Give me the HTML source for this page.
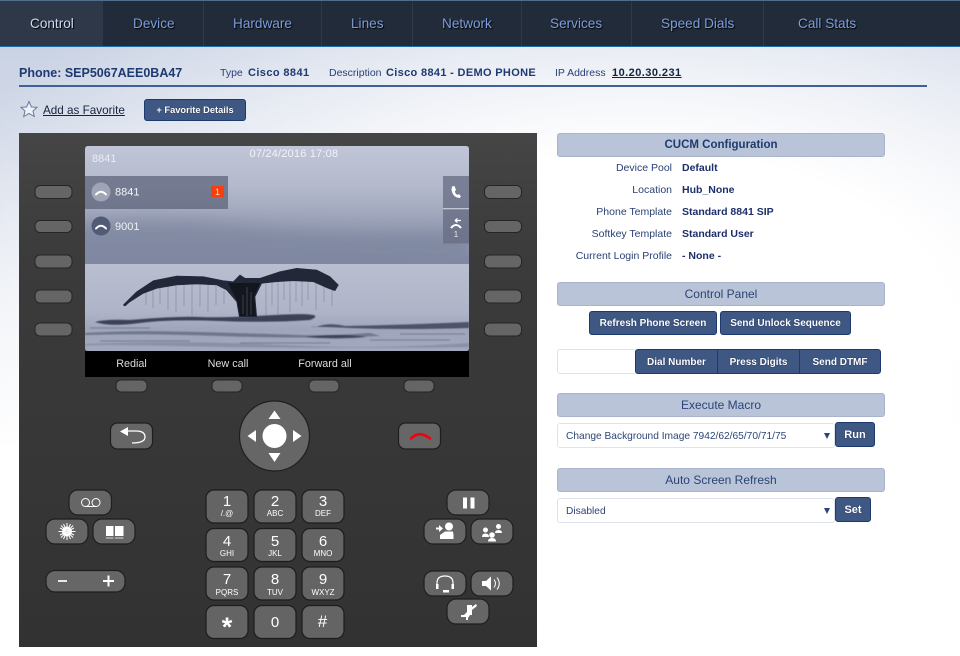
<!DOCTYPE html>
<html><head><meta charset="utf-8"><title>Phone Control</title>
<style>
html,body{margin:0;padding:0}
body{width:960px;height:656px;overflow:hidden;position:relative;font-family:"Liberation Sans",sans-serif;color:#1f3a70;
background:radial-gradient(ellipse 760px 420px at 640px 320px,#fff 40%,rgba(255,255,255,0) 100%),linear-gradient(180deg,#cad3e4 46px,#d3dae8 140px,#eef1f6 300px,#fff 450px);}
.a{position:absolute;white-space:nowrap}
#nav{left:0;top:0;width:960px;background:#222b3a;border-top:1px solid #4f6f8a;border-bottom:1px solid #1d6ea8;box-sizing:content-box;height:45px}
#nav .t{position:absolute;top:15px;font-size:13.6px;line-height:16px;color:#7c9ddb;text-shadow:1px 1px 1px #000}
#nav .s{position:absolute;top:0;height:45px;width:1px;background:#2f3949}
#act{position:absolute;left:0;top:0;width:103px;height:45px;background:#2e3849}
.b{font-weight:bold}
.hd{position:absolute;left:557px;width:328px;height:24px;box-sizing:border-box;background:#b9c4d8;border:1px solid #a8b4cb;border-radius:3px;text-align:center;font-size:12px;line-height:22px;color:#2b4377}
.lb{position:absolute;width:672px;left:0;text-align:right;font-size:10.5px;line-height:12px;color:#2a4176}
.vl{position:absolute;left:682px;font-size:10.5px;line-height:12px;font-weight:bold;color:#1c2f6b;white-space:nowrap}
.btn{position:absolute;box-sizing:border-box;background:#3f5783;border:1px solid #1d3a70;border-radius:3px;color:#fff;text-align:center;font-size:10px;font-weight:bold;line-height:23px;text-shadow:0 0 1px #0a1a3a}
.sel{position:absolute;left:557px;width:278px;height:25px;box-sizing:border-box;background:#fff;border:1px solid #dfe3ec;border-radius:3px;font-size:10.2px;line-height:25px;padding-left:8px;color:#2d4576}
.sel i{position:absolute;right:4px;top:9px;width:0;height:0;border-left:3.5px solid transparent;border-right:3.5px solid transparent;border-top:6px solid #2d4576}
svg{position:absolute;left:0;top:0}
</style></head><body>
<div id="nav" class="a">
<div id="act"></div>
<span class="s" style="left:203px"></span><span class="s" style="left:321px"></span><span class="s" style="left:412px"></span><span class="s" style="left:521px"></span><span class="s" style="left:631px"></span><span class="s" style="left:763px"></span>
<span class="t" style="left:30px;color:#c9daf3">Control</span>
<span class="t" style="left:133px">Device</span>
<span class="t" style="left:233px">Hardware</span>
<span class="t" style="left:351px">Lines</span>
<span class="t" style="left:442px">Network</span>
<span class="t" style="left:550px">Services</span>
<span class="t" style="left:661px">Speed Dials</span>
<span class="t" style="left:798px">Call Stats</span>
</div>

<div class="a b" style="left:19px;top:66px;font-size:12.5px;line-height:14px;color:#1f3a70">Phone: SEP5067AEE0BA47</div>
<div class="a" style="left:220px;top:67px;font-size:10.5px;line-height:13px;color:#2a4176">Type</div>
<div class="a b" style="left:248px;top:66px;font-size:11px;line-height:14px;letter-spacing:.4px;color:#1f3a70">Cisco 8841</div>
<div class="a" style="left:329px;top:67px;font-size:10.5px;line-height:13px;color:#2a4176">Description</div>
<div class="a b" style="left:386px;top:66px;font-size:11px;line-height:14px;letter-spacing:.33px;color:#1f3a70">Cisco 8841 - DEMO PHONE</div>
<div class="a" style="left:555px;top:67px;font-size:10.5px;line-height:13px;color:#2a4176">IP Address</div>
<div class="a b" style="left:612px;top:66px;font-size:11px;line-height:14px;letter-spacing:.45px;color:#15233f;text-decoration:underline">10.20.30.231</div>
<div class="a" style="left:19px;top:85px;width:908px;height:2px;background:#3f6196"></div>

<svg width="960" height="656" viewBox="0 0 960 656" style="pointer-events:none">
<defs>
<linearGradient id="sky" x1="0" y1="0" x2="0" y2="1">
<stop offset="0" stop-color="#c0c6d7"/><stop offset=".35" stop-color="#b3b9cb"/><stop offset=".6" stop-color="#9ea5ba"/><stop offset=".8" stop-color="#8f96ad"/><stop offset="1" stop-color="#858da6"/></linearGradient>
<linearGradient id="water" x1="0" y1="0" x2="0" y2="1">
<stop offset="0" stop-color="#b9bed0"/><stop offset=".55" stop-color="#afb4c8"/><stop offset=".75" stop-color="#9fa5bb"/><stop offset="1" stop-color="#a2a8be"/></linearGradient>
<linearGradient id="body" x1="0" y1="0" x2="0" y2="1"><stop offset="0" stop-color="#454545"/><stop offset=".25" stop-color="#3b3b3b"/><stop offset="1" stop-color="#323232"/></linearGradient>
<filter id="bl" x="-20%" y="-50%" width="140%" height="200%"><feGaussianBlur stdDeviation="8"/></filter>
<filter id="bl1"><feGaussianBlur stdDeviation=".5"/></filter>
<clipPath id="scr"><path d="M88 146H466Q469 146 469 149V348Q469 351 466 351H88Q85 351 85 348V149Q85 146 88 146Z"/></clipPath>
</defs>

<polygon points="29,101.5 31.4,107 37,107.3 33,111 34.300,116.500 29,113.500 23.700,116.500 25,111 21,107.300 26.600,107" fill="#eef1f8" stroke="#6b7a96" stroke-width="1"/>

<rect x="19" y="133" width="518" height="514" fill="url(#body)"/>
<!-- screen -->
<g clip-path="url(#scr)">
<rect x="85" y="146" width="384" height="120" fill="url(#sky)"/>
<g filter="url(#bl)" opacity=".7">
<path d="M70 225Q150 215 240 225T469 232V270H70Z" fill="#7c859e"/>
</g>
<path d="M85 259Q150 255 200 258T300 256T400 259T469 256V266H85Z" fill="#7f87a1" filter="url(#bl1)"/>
<rect x="85" y="264" width="384" height="87" fill="url(#water)"/>
<g filter="url(#bl1)" fill="#2b3044">
<path d="M95 322Q105 319 130 320Q180 316 200 317T275 315T310 320Q270 323 220 321T140 323T95 322Z" opacity=".85"/>
<path d="M315 327Q330 322 345 326Q400 325 469 322V328Q400 330 350 328T315 327Z" opacity=".7"/>
<path d="M85 333Q130 330 200 332T300 335T370 333L380 336Q300 339 220 336T85 335Z" opacity=".4"/>
<path d="M305 337Q340 333 367 337Q335 340 305 337Z" opacity=".75"/>
<path d="M85 344Q180 340 280 345T469 343V347Q300 349 180 346T85 348Z" opacity=".2"/>
<path d="M100 341H190M240 343H330M370 340H450M90 328H150M400 334H465" stroke="#2b3044" stroke-width="1" opacity=".35"/>
</g>
<!-- whale drips -->
<g stroke="#454b62" stroke-width=".6" opacity=".45">
<path d="M146 292V305M153 290V308M160 287V304M168 286V310M176 286V312M184 285V306M192 285V315M200 285V307M208 285V312M216 286V305M224 291V304M266 284V316M272 283V305M278 282V314M284 282V300M290 281V312M296 281V302M302 281V306M308 282V300M316 283V310M324 286V302M332 290V306"/>
</g>
<!-- whale -->
<polygon points="123.300,305 136.700,291.700 153.300,280.700 176.700,276 203.300,276.700 223.300,280.700 233.300,281.700 240,275 245,278.300 260,278.300 280,271.700 296.700,268.300 316.700,270 330,276.700 338.300,285 335,290.700 328.300,288.300 313.300,281.700 293.300,280.700 276.700,281.700 261.700,283.300 255,296.700 256.700,316.700 239.300,316.700 236.700,301.700 226.700,290 216.700,285 196.700,284 176.700,285 156.700,288.300 143.300,293.300 130,301.700 125,306" fill="#232839" stroke="#232839" stroke-width=".6" stroke-linejoin="round"/>
<path d="M228 283H260L254 297 256 316H240L237 301Z" fill="#14161e"/>
<path d="M247 287V316M243 295V314M251 292V315" stroke="#8f95a8" stroke-width=".6" opacity=".55"/>
<!-- line rows -->
<rect x="85" y="176" width="143" height="33" fill="#5b6178" opacity=".72"/>
<circle cx="101" cy="192" r="9.5" fill="#a0a4b4"/>
<circle cx="101" cy="226" r="9.5" fill="#525b75"/>
<path d="M96 194.500Q101 189 106 194.500" fill="none" stroke="#fff" stroke-width="2" stroke-linecap="round"/>
<path d="M96 228.500Q101 223 106 228.500" fill="none" stroke="#fff" stroke-width="2" stroke-linecap="round"/>
<rect x="211" y="186" width="13" height="11" fill="#f6400c"/>
<text x="217.500" y="195" font-size="9" fill="#f3d9cc" text-anchor="middle">1</text>
<text x="92" y="162" font-size="11" fill="#e9ecf3">8841</text>
<text x="249.500" y="157" font-size="11.200" fill="#f1f3f8" letter-spacing=".1">07/24/2016 17:08</text>
<text x="115" y="195.500" font-size="11" fill="#f4f5f9">8841</text>
<text x="115" y="230" font-size="11" fill="#eef0f6">9001</text>
<!-- right session tabs -->
<rect x="443" y="176" width="26" height="33" fill="#6a7086" opacity=".8"/>
<rect x="443" y="209.500" width="26" height="34" fill="#6a7086" opacity=".85"/>
<line x1="443" y1="208.500" x2="469" y2="208.500" stroke="#c3c7d4" stroke-width="1"/>
<path d="M452 186.500L454.500 186L456 190L454.800 191.500Q455.500 194 457.500 195L459 194L461 196.500L459.500 198Q453 197.500 451.500 190Z" fill="#fff"/>
<path d="M455 220.500H461M455 220.500L457.500 218.500M455 220.500L457.500 222.500" stroke="#fff" stroke-width="1.300" fill="none"/>
<path d="M451 228Q456 222 461 228" stroke="#fff" stroke-width="2" fill="none"/>
<text x="456" y="237" font-size="8" fill="#e8eaf1" text-anchor="middle">1</text>
</g>
<!-- softkey bar -->
<rect x="85" y="351" width="384" height="26" fill="#000"/>
<g font-size="10.800" fill="#dcdcdc" text-anchor="middle">
<text x="131.500" y="367">Redial</text><text x="228" y="367">New call</text><text x="325" y="367">Forward all</text>
</g>
<!-- side softkeys -->
<g fill="#656565" stroke="#252525" stroke-width="1">
<rect x="35" y="185.500" width="37" height="13" rx="5"/><rect x="35" y="220.500" width="37" height="12" rx="5"/><rect x="35" y="255" width="37" height="13" rx="5"/><rect x="35" y="290" width="37" height="13" rx="5"/><rect x="35" y="323" width="37" height="13" rx="5"/>
<rect x="484.500" y="185.500" width="37" height="13" rx="5"/><rect x="484.500" y="220.500" width="37" height="12" rx="5"/><rect x="484.500" y="255" width="37" height="13" rx="5"/><rect x="484.500" y="290" width="37" height="13" rx="5"/><rect x="484.500" y="323" width="37" height="13" rx="5"/>
<rect x="116" y="380" width="31" height="12" rx="5"/><rect x="212" y="380" width="30" height="12" rx="5"/><rect x="309" y="380" width="30" height="12" rx="5"/><rect x="404" y="380" width="30" height="12" rx="5"/>
</g>
<!-- nav cluster -->
<circle cx="274.500" cy="436" r="35" fill="#666" stroke="#1e1e1e" stroke-width="1.200"/>
<circle cx="274.500" cy="436" r="12" fill="#fff"/>
<g fill="#fff"><path d="M268.500 419L274.500 410.500L280.500 419Z"/><path d="M268.500 453L274.500 462L280.500 453Z"/><path d="M256 430V442L247.500 436Z"/><path d="M293 430V442L301.500 436Z"/></g>
<g fill="#666" stroke="#1e1e1e" stroke-width="1.200">
<rect x="110.500" y="423" width="42" height="26" rx="7"/><rect x="398.500" y="423" width="42" height="26" rx="7"/>
<rect x="69" y="490" width="42.500" height="25" rx="9"/><rect x="46" y="519" width="42" height="25" rx="9"/><rect x="93" y="519" width="42" height="25" rx="9"/>
<rect x="46" y="570.500" width="79" height="21.500" rx="9"/>
<rect x="447" y="490" width="42" height="25" rx="9"/><rect x="424" y="519" width="42" height="25" rx="9"/><rect x="471" y="519" width="42" height="25" rx="9"/>
<rect x="424" y="571" width="42" height="25" rx="9"/><rect x="471" y="571" width="42" height="25" rx="9"/><rect x="447" y="599" width="42" height="25" rx="9"/>
</g>
<!-- back -->
<path d="M125 431H136Q145 431 145 437Q145 443 132 443" fill="none" stroke="#fff" stroke-width="1.300"/>
<path d="M120 431.500L128 427V436Z" fill="#fff"/>
<!-- end -->
<path d="M411 438.500Q419.500 430 430 438.500" fill="none" stroke="#f5000e" stroke-width="2.600" stroke-linecap="round"/>
<!-- voicemail -->
<g fill="none" stroke="#fff" stroke-width="1"><circle cx="85.500" cy="502.500" r="4"/><circle cx="96" cy="502.500" r="4"/><path d="M85.500 506.500H96"/></g>
<!-- settings -->
<g stroke="#fff" stroke-width="1"><path d="M67 523V540M58.500 531.500H75.500M61 525.500L73 537.500M61 537.500L73 525.500M63.500 524L70.500 539M63.500 539L70.500 524M60 528L74 535M60 535L74 528"/></g>
<circle cx="67" cy="531.500" r="5" fill="#fff"/>
<circle cx="67" cy="531.500" r="2.500" fill="#eee"/>
<!-- contacts -->
<path d="M106 526H113.500V536H106ZM115 526H123.500V536H115Z" fill="#fff"/><path d="M106 538H113.500M115 538H123.500" stroke="#fff" stroke-width=".8"/>
<!-- vol -->
<path d="M58 581H67" stroke="#e8e8e8" stroke-width="2"/><path d="M103 581H114M108.500 575.500V586.500" stroke="#fff" stroke-width="2"/>
<!-- pause -->
<path d="M463 497.500H467V508.500H463ZM470.500 497.500H474.500V508.500H470.500Z" fill="#fff"/>
<!-- transfer -->
<path d="M436 527.500H439V525L443 528.500L439 532V529.500H436Z" fill="#fff"/>
<circle cx="449" cy="526.500" r="4" fill="#fff"/><path d="M440 539V535L445 531.500H453L453.500 535V539Z" fill="#fff"/>
<!-- conf -->
<g fill="#fff"><circle cx="485.500" cy="530" r="2.500"/><path d="M482 537Q482 533.500 485.500 533.500T489 537Z"/><circle cx="498.500" cy="526.500" r="2.500"/><path d="M495 533Q495 530 498.500 530T502 533Z"/><circle cx="492" cy="535" r="2.800"/><path d="M488 541.500Q488 538 492 538T496 541.500Z"/></g>
<!-- headset -->
<path d="M437 588V583Q437 576 445 576Q453 576 453 583V588" fill="none" stroke="#fff" stroke-width="1.200"/>
<path d="M436 584H438.500V589H436ZM451.500 584H454V589H451.500ZM443 590H449V592.500H443Z" fill="#fff"/>
<!-- speaker -->
<path d="M482 581H486L491 576.500V590.500L486 586H482Z" fill="#fff"/><path d="M494 579.500Q497 583.500 494 587.500M497 577.500Q501.500 583.500 497 589.500" fill="none" stroke="#fff" stroke-width="1"/>
<!-- mute -->
<path d="M467 605H472V607L476 604L477 606L472 610V615H470L468 618V620H466V617H461V615H464L467 612Z" fill="#fff"/>
<!-- keypad -->
<g fill="#646464" stroke="#1c1c1c" stroke-width="1.200">
<rect x="206" y="490" width="42" height="33" rx="8"/><rect x="254" y="490" width="42" height="33" rx="8"/><rect x="302" y="490" width="42" height="33" rx="8"/>
<rect x="206" y="528.500" width="42" height="33" rx="8"/><rect x="254" y="528.500" width="42" height="33" rx="8"/><rect x="302" y="528.500" width="42" height="33" rx="8"/>
<rect x="206" y="567" width="42" height="33" rx="8"/><rect x="254" y="567" width="42" height="33" rx="8"/><rect x="302" y="567" width="42" height="33" rx="8"/>
<rect x="206" y="605.500" width="42" height="33" rx="8"/><rect x="254" y="605.500" width="42" height="33" rx="8"/><rect x="302" y="605.500" width="42" height="33" rx="8"/>
</g>
<g fill="#fff" text-anchor="middle" font-size="15">
<text x="227" y="506">1</text><text x="275" y="506">2</text><text x="323" y="506">3</text>
<text x="227" y="546">4</text><text x="275" y="546">5</text><text x="323" y="546">6</text>
<text x="227" y="584">7</text><text x="275" y="584">8</text><text x="323" y="584">9</text>
<text x="275" y="627">0</text><text x="322.500" y="627" font-size="17">#</text>
<text x="227" y="636" font-size="27" font-weight="bold">*</text>
</g>
<g fill="#fff" text-anchor="middle" font-size="8">
<text x="227" y="516">/.@</text><text x="275" y="516">ABC</text><text x="323" y="516">DEF</text>
<text x="227" y="556">GHI</text><text x="275" y="556">JKL</text><text x="323" y="556">MNO</text>
<text x="227" y="595">PQRS</text><text x="275" y="595">TUV</text><text x="323" y="595">WXYZ</text>
</g>
</svg>

<div class="a" style="left:43px;top:104px;font-size:11.7px;line-height:14px;color:#15233f;text-decoration:underline">Add as Favorite</div>
<div class="btn" style="left:144px;top:99px;width:102px;height:22px;font-size:9.300px;line-height:21px">+ Favorite Details</div>

<div class="hd b" style="top:133px;color:#1f3a70;font-size:11.5px;line-height:23px">CUCM Configuration</div>
<div class="lb" style="top:162px">Device Pool</div><div class="vl" style="top:162px">Default</div>
<div class="lb" style="top:184px">Location</div><div class="vl" style="top:184px">Hub_None</div>
<div class="lb" style="top:206px">Phone Template</div><div class="vl" style="top:206px">Standard 8841 SIP</div>
<div class="lb" style="top:228px">Softkey Template</div><div class="vl" style="top:228px">Standard User</div>
<div class="lb" style="top:250px">Current Login Profile</div><div class="vl" style="top:250px">- None -</div>

<div class="hd" style="top:282px">Control Panel</div>
<div class="btn" style="left:589px;top:311px;width:128px;height:24px">Refresh Phone Screen</div>
<div class="btn" style="left:720px;top:311px;width:131px;height:24px">Send Unlock Sequence</div>
<div class="a" style="left:557px;top:349px;width:80px;height:25px;box-sizing:border-box;background:#fff;border:1px solid #dfe3ec;border-radius:3px"></div>
<div class="btn" style="left:635px;top:349px;width:83px;height:25px;border-radius:3px 0 0 3px;line-height:25px">Dial Number</div>
<div class="btn" style="left:717px;top:349px;width:83px;height:25px;border-radius:0;line-height:25px">Press Digits</div>
<div class="btn" style="left:799px;top:349px;width:82px;height:25px;border-radius:0 3px 3px 0;line-height:25px">Send DTMF</div>

<div class="hd" style="top:393px">Execute Macro</div>
<div class="sel" style="top:423px">Change Background Image 7942/62/65/70/71/75<i></i></div>
<div class="btn" style="left:835px;top:422px;width:40px;height:25px;line-height:24px;font-size:11px">Run</div>

<div class="hd" style="top:468px">Auto Screen Refresh</div>
<div class="sel" style="top:498px">Disabled<i></i></div>
<div class="btn" style="left:835px;top:497px;width:36px;height:25px;line-height:24px;font-size:11px">Set</div>
</body></html>
